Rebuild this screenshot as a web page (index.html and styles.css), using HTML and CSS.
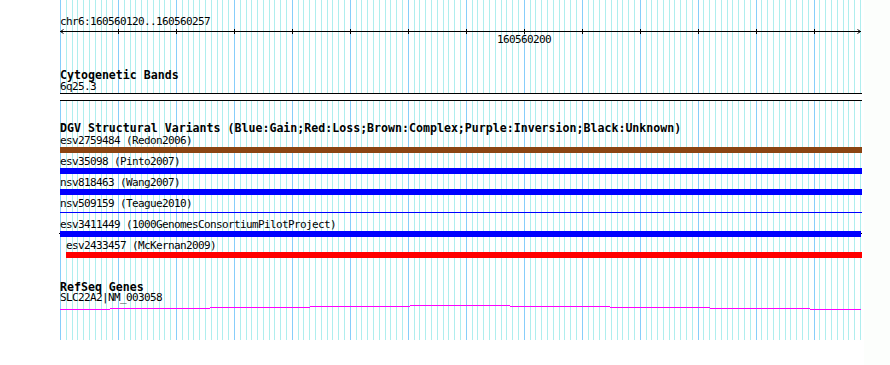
FILE: index.html
```html
<!DOCTYPE html>
<html lang="en">
<head>
  <meta charset="UTF-8">
  <meta name="viewport" content="width=device-width, initial-scale=1.0">
  <title>chr6:160560120..160560257</title>
  <link rel="stylesheet" href="styles.css">
</head>
<body>

<div class="browser">
  <!-- one grid line per base, drawn by the script at the bottom -->
  <svg class="grid" id="grid" width="802" height="340"></svg>

  <div class="panel">
    <!-- Ruler -->
    <div class="ruler">
      <div class="label">chr6:160560120..160560257</div>
      <svg class="scale" id="scale" width="804" height="7">
        <path class="axis" d="M0 3.5H801 M3.5 1.5L0.5 3.5L3.5 5.5 M797.5 1.5L800.5 3.5L797.5 5.5"/>
      </svg>
      <div class="label tick-label">160560200</div>
    </div>

    <!-- Cytogenetic bands -->
    <div class="track cyto">
      <div class="title">Cytogenetic Bands</div>
      <div class="label">6q25.3</div>
      <div class="band"></div>
    </div>

    <!-- DGV -->
    <div class="track dgv">
      <div class="title">DGV Structural Variants (Blue:Gain;Red:Loss;Brown:Complex;Purple:Inversion;Black:Unknown)</div>

      <div class="feature">
        <div class="label">esv2759484 (Redon2006)</div>
        <div class="bar complex"></div>
      </div>
      <div class="feature">
        <div class="label">esv35098 (Pinto2007)</div>
        <div class="bar gain"></div>
      </div>
      <div class="feature">
        <div class="label">nsv818463 (Wang2007)</div>
        <div class="bar gain"></div>
      </div>
      <div class="feature">
        <div class="label">nsv509159 (Teague2010)</div>
        <div class="bar gain thin"></div>
      </div>
      <div class="feature">
        <div class="label">esv3411449 (1000GenomesConsortiumPilotProject)</div>
        <div class="bar gain edged"></div>
      </div>
      <div class="feature offset">
        <div class="label">esv2433457 (McKernan2009)</div>
        <div class="bar loss"></div>
      </div>
    </div>

    <!-- RefSeq -->
    <div class="track refseq">
      <div class="title">RefSeq Genes</div>
      <div class="label">SLC22A2|NM_003058</div>
      <svg class="gene" width="804" height="10">
        <path d="M0 6.5H50 M50 5.5H150 M150 4.5H250 M250 3.5H350 M350 2.5H450 M450 3.5H550 M550 4.5H650 M650 5.5H750 M750 6.5H801"/>
      </svg>
    </div>
  </div>
</div>

<script>
  const NS = 'http://www.w3.org/2000/svg';
  const BASES = 138;   // 160560120..160560257
  const WIDTH = 800;   // pixels across the grid

  const grid = document.getElementById('grid');
  const scale = document.getElementById('scale');

  function addLine(svg, x, y1, y2, cls) {
    const line = document.createElementNS(NS, 'line');
    line.setAttribute('x1', x);
    line.setAttribute('x2', x);
    line.setAttribute('y1', y1);
    line.setAttribute('y2', y2);
    line.setAttribute('class', cls);
    svg.appendChild(line);
  }

  for (let i = 0; i <= BASES; i++) {
    const x = Math.round(i * WIDTH / BASES) + 0.5;
    const major = i % 10 === 0;
    addLine(grid, x, 0, 340, major ? 'major' : 'minor');

    // ticks on the ruler every 10 bases
    if (major && i > 0) {
      addLine(scale, x, 1, 6, 'tick');
    }
  }
</script>

</body>
</html>
```

FILE: styles.css
```css
/* Reset */
html, body {
  margin: 0;
  padding: 0;
}

body {
  background: #fcfefc;
  color: #000;
  font-family: "DejaVu Sans Mono", "Liberation Mono", monospace;
}

.browser {
  position: relative;
  width: 864px;
  height: 365px;
  background: #fff;
}

/* Grid behind the tracks */
.grid {
  position: absolute;
  left: 60px;
  top: 0;
  shape-rendering: crispEdges;
}

.grid .minor {
  stroke: #afeeee;
  stroke-width: 1;
}

.grid .major {
  stroke: #87cefa;
  stroke-width: 1;
}

.panel {
  position: relative;
  margin-left: 60px;
  width: 802px;
}

/* Text */
.label {
  height: 10px;
  font-size: 11px;
  line-height: 10px;
  letter-spacing: -0.62px;
  white-space: nowrap;
}

.title {
  height: 10px;
  font-size: 11.6px;
  font-weight: bold;
  line-height: 10px;
  white-space: nowrap;
}

/* Ruler */
.ruler {
  padding-top: 17px;
}

.scale {
  display: block;
  margin-top: 1px;
  overflow: visible;
}

.scale .axis,
.scale .tick {
  fill: none;
  stroke: #000;
  stroke-width: 1;
}

.tick-label {
  padding-left: 437px;
}

/* Tracks */
.cyto {
  margin-top: 25px;
}

.cyto .label {
  margin-top: 2px;
}

.band {
  box-sizing: border-box;
  height: 8px;
  margin-top: 1px;
  background: #fff;
  border-top: 1px solid #000;
  border-bottom: 1px solid #000;
}

.dgv {
  margin-top: 22px;
}

.dgv .title {
  margin-bottom: -1px;
}

.feature {
  padding-top: 4px;
}

.feature.offset {
  margin-left: 6px;
}

.bar {
  height: 6px;
  margin-top: 1px;
}

.bar.complex { background: #8b4513; }
.bar.gain    { background: #0000ff; }
.bar.loss    { background: #ff0000; }

.bar.thin {
  height: 1px;
  margin-top: 3px;
  margin-bottom: 3px;
}

/* bar with a black stub sticking out at both ends */
.bar.edged {
  position: relative;
  margin-right: 1px;
}

.bar.edged::before,
.bar.edged::after {
  content: '';
  position: absolute;
  top: 2px;
  width: 1px;
  height: 1px;
  background: #000;
}

.bar.edged::before { left: -1px; }
.bar.edged::after  { right: -1px; }

.refseq {
  margin-top: 24px;
}

.refseq .label {
  margin-top: 1px;
}

.gene {
  display: block;
  shape-rendering: crispEdges;
}

.gene path {
  fill: none;
  stroke: #ff00ff;
  stroke-width: 1;
}
```
